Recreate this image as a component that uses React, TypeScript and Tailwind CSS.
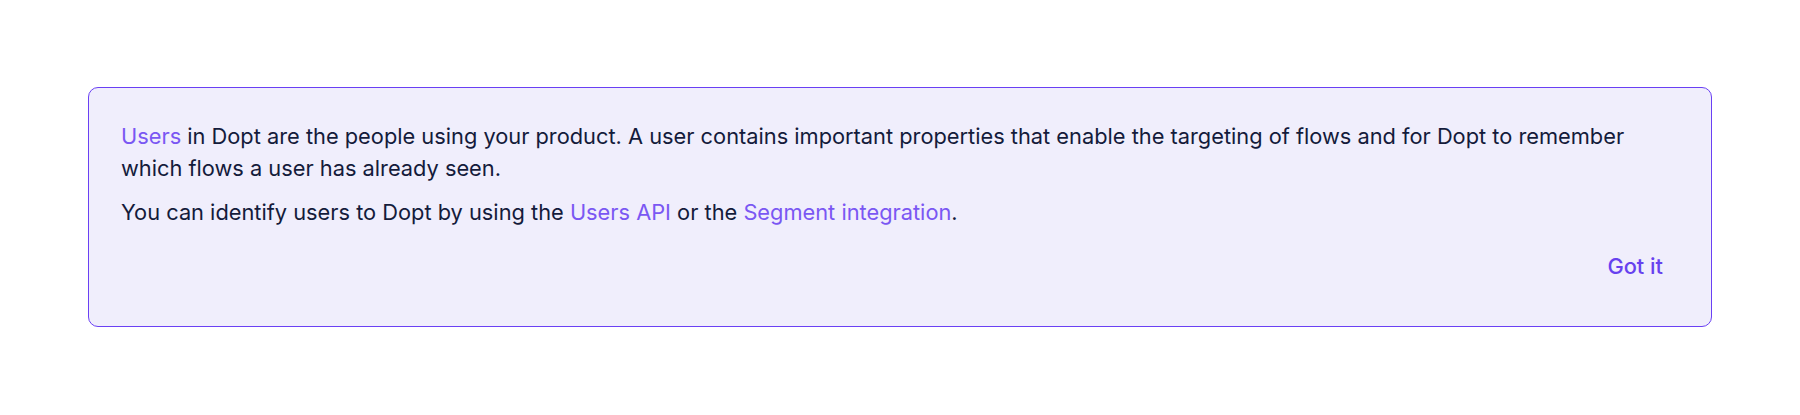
export default function App() {
  return (
    <div className="w-full min-h-[415px] bg-white p-[87px_88px] box-border" style={{ fontFamily: "Inter, 'Noto Sans', sans-serif" }}>
      <div className="rounded-[10px] border border-[#6a40f4] bg-[#f0eefc] px-8 pt-8 pb-[36px]">
        <p className="text-[21.8px] leading-[32px] text-[#141b3b]">
          <a className="text-[#7a57f3]">Users</a> in Dopt are the people using your product. A user contains important properties that enable the targeting of flows and for Dopt to remember which flows a user has already seen.
        </p>
        <p className="mt-3 text-[21.8px] leading-[32px] text-[#141b3b]">
          You can identify users to Dopt by using the <a className="text-[#7a57f3]">Users API</a> or the <a className="text-[#7a57f3]">Segment integration</a>.
        </p>
        <div className="mt-[14px] flex justify-end">
          <button className="px-4 py-2.5 text-[21.8px] leading-[28px] font-medium text-[#6741ef]">Got it</button>
        </div>
      </div>
    </div>
  );
}
